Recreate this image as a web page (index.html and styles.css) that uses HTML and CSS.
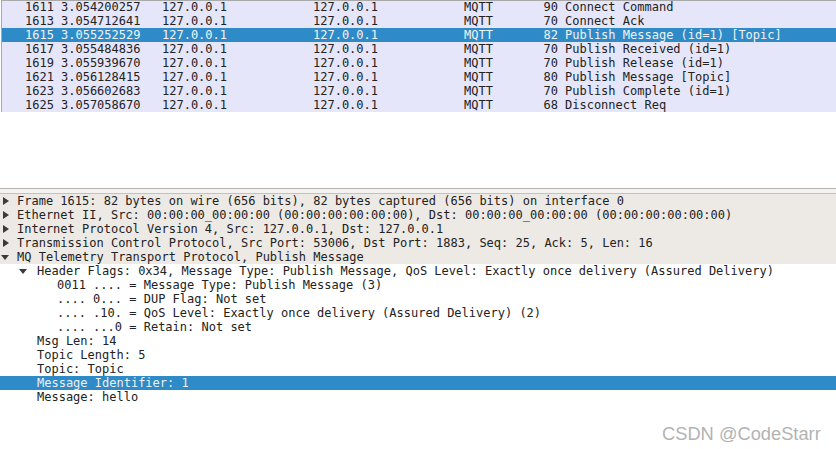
FILE: index.html
```html
<!DOCTYPE html>
<html>
<head>
<meta charset="utf-8">
<link rel="stylesheet" href="styles.css">
</head>
<body>
<div class="app">
  <div class="plist">
    <div class="prow"><span class="c-no">1611</span><span class="c-time">3.054200257</span><span class="c-src">127.0.0.1</span><span class="c-dst">127.0.0.1</span><span class="c-proto">MQTT</span><span class="c-len">90</span><span class="c-info">Connect Command</span></div>
    <div class="prow"><span class="c-no">1613</span><span class="c-time">3.054712641</span><span class="c-src">127.0.0.1</span><span class="c-dst">127.0.0.1</span><span class="c-proto">MQTT</span><span class="c-len">70</span><span class="c-info">Connect Ack</span></div>
    <div class="prow sel"><span class="c-no">1615</span><span class="c-time">3.055252529</span><span class="c-src">127.0.0.1</span><span class="c-dst">127.0.0.1</span><span class="c-proto">MQTT</span><span class="c-len">82</span><span class="c-info">Publish Message (id=1) [Topic]</span></div>
    <div class="prow"><span class="c-no">1617</span><span class="c-time">3.055484836</span><span class="c-src">127.0.0.1</span><span class="c-dst">127.0.0.1</span><span class="c-proto">MQTT</span><span class="c-len">70</span><span class="c-info">Publish Received (id=1)</span></div>
    <div class="prow"><span class="c-no">1619</span><span class="c-time">3.055939670</span><span class="c-src">127.0.0.1</span><span class="c-dst">127.0.0.1</span><span class="c-proto">MQTT</span><span class="c-len">70</span><span class="c-info">Publish Release (id=1)</span></div>
    <div class="prow"><span class="c-no">1621</span><span class="c-time">3.056128415</span><span class="c-src">127.0.0.1</span><span class="c-dst">127.0.0.1</span><span class="c-proto">MQTT</span><span class="c-len">80</span><span class="c-info">Publish Message [Topic]</span></div>
    <div class="prow"><span class="c-no">1623</span><span class="c-time">3.056602683</span><span class="c-src">127.0.0.1</span><span class="c-dst">127.0.0.1</span><span class="c-proto">MQTT</span><span class="c-len">70</span><span class="c-info">Publish Complete (id=1)</span></div>
    <div class="prow"><span class="c-no">1625</span><span class="c-time">3.057058670</span><span class="c-src">127.0.0.1</span><span class="c-dst">127.0.0.1</span><span class="c-proto">MQTT</span><span class="c-len">68</span><span class="c-info">Disconnect Req</span></div>
  </div>
  <div class="spacer"></div>
  <div class="splitter"></div>
  <div class="dtree">
    <div class="drow top"><span class="tw closed"></span><span class="txt">Frame 1615: 82 bytes on wire (656 bits), 82 bytes captured (656 bits) on interface 0</span></div>
    <div class="drow top"><span class="tw closed"></span><span class="txt">Ethernet II, Src: 00:00:00_00:00:00 (00:00:00:00:00:00), Dst: 00:00:00_00:00:00 (00:00:00:00:00:00)</span></div>
    <div class="drow top"><span class="tw closed"></span><span class="txt">Internet Protocol Version 4, Src: 127.0.0.1, Dst: 127.0.0.1</span></div>
    <div class="drow top"><span class="tw closed"></span><span class="txt">Transmission Control Protocol, Src Port: 53006, Dst Port: 1883, Seq: 25, Ack: 5, Len: 16</span></div>
    <div class="drow top"><span class="tw open"></span><span class="txt">MQ Telemetry Transport Protocol, Publish Message</span></div>
    <div class="drow l1"><span class="tw open"></span><span class="txt">Header Flags: 0x34, Message Type: Publish Message, QoS Level: Exactly once delivery (Assured Delivery)</span></div>
    <div class="drow l2"><span class="txt">0011 .... = Message Type: Publish Message (3)</span></div>
    <div class="drow l2"><span class="txt">.... 0... = DUP Flag: Not set</span></div>
    <div class="drow l2"><span class="txt">.... .10. = QoS Level: Exactly once delivery (Assured Delivery) (2)</span></div>
    <div class="drow l2"><span class="txt">.... ...0 = Retain: Not set</span></div>
    <div class="drow l1"><span class="txt">Msg Len: 14</span></div>
    <div class="drow l1"><span class="txt">Topic Length: 5</span></div>
    <div class="drow l1"><span class="txt">Topic: Topic</span></div>
    <div class="drow l1 sel"><span class="txt">Message Identifier: 1</span></div>
    <div class="drow l1"><span class="txt">Message: hello</span></div>
  </div>
  <div class="watermark">CSDN @CodeStarr</div>
</div>
</body>
</html>
```
FILE: styles.css
```css
html, body {
  margin: 0;
  padding: 0;
  background: #ffffff;
}
.app {
  width: 836px;
  height: 449px;
  position: relative;
  overflow: hidden;
  font-family: "DejaVu Sans Mono", "Liberation Mono", monospace;
  font-size: 12px;
  color: #222222;
}
.plist {
  margin-left: 1px;
  border-left: 1px solid #a8a8a8;
}
.prow {
  display: flex;
  height: 14px;
  line-height: 15px;
  background: #e6e6fa;
  white-space: pre;
}
.prow:first-child {
  box-shadow: inset 0 1px 0 #a9a9a9;
}
.prow.sel {
  background: #2f8bc8;
  color: #f2f2f2;
}
.prow span { flex: none; overflow: hidden; }
.c-no { width: 52px; text-align: right; }
.c-time { width: 101px; margin-left: 7px; }
.c-src { width: 151px; }
.c-dst { width: 151px; }
.c-proto { width: 60px; }
.c-len { width: 34px; text-align: right; }
.c-info { margin-left: 7px; }
.spacer { height: 76px; }
.splitter {
  height: 4px;
  border-top: 1px solid #b4b2ae;
  border-bottom: 1px solid #c4c2be;
  background: #f3f2f0;
}
.dtree {
  display: flex;
  flex-direction: column;
}
.drow {
  display: flex;
  align-items: center;
  height: 14px;
  line-height: 14px;
  white-space: pre;
  position: relative;
}
.drow.top { background: #edeae6; padding-left: 2px; }
.drow.l1 { padding-left: 20px; }
.drow.l2 { padding-left: 57px; }
.drow.l1 .txt { margin-left: 17px; }
.drow.l1 .tw + .txt { margin-left: 8px; }
.drow.sel { background: #2f8bc8; color: #f0f0f0; }
.tw {
  width: 15px;
  height: 14px;
  flex: none;
  position: relative;
}
.tw.closed::before {
  content: "";
  position: absolute;
  left: 1px;
  top: 3px;
  border-left: 6px solid #3a3a3a;
  border-top: 4px solid transparent;
  border-bottom: 4px solid transparent;
}
.tw.open::before {
  content: "";
  position: absolute;
  left: -1px;
  top: 5px;
  border-top: 5px solid #3a3a3a;
  border-left: 4px solid transparent;
  border-right: 4px solid transparent;
}
.drow.l1 .tw { width: 9px; }
.watermark {
  position: absolute;
  left: 662px;
  top: 423px;
  font-family: "Liberation Sans", Arial, sans-serif;
  font-size: 18.3px;
  color: #b3b3b3;
  white-space: nowrap;
}
```
